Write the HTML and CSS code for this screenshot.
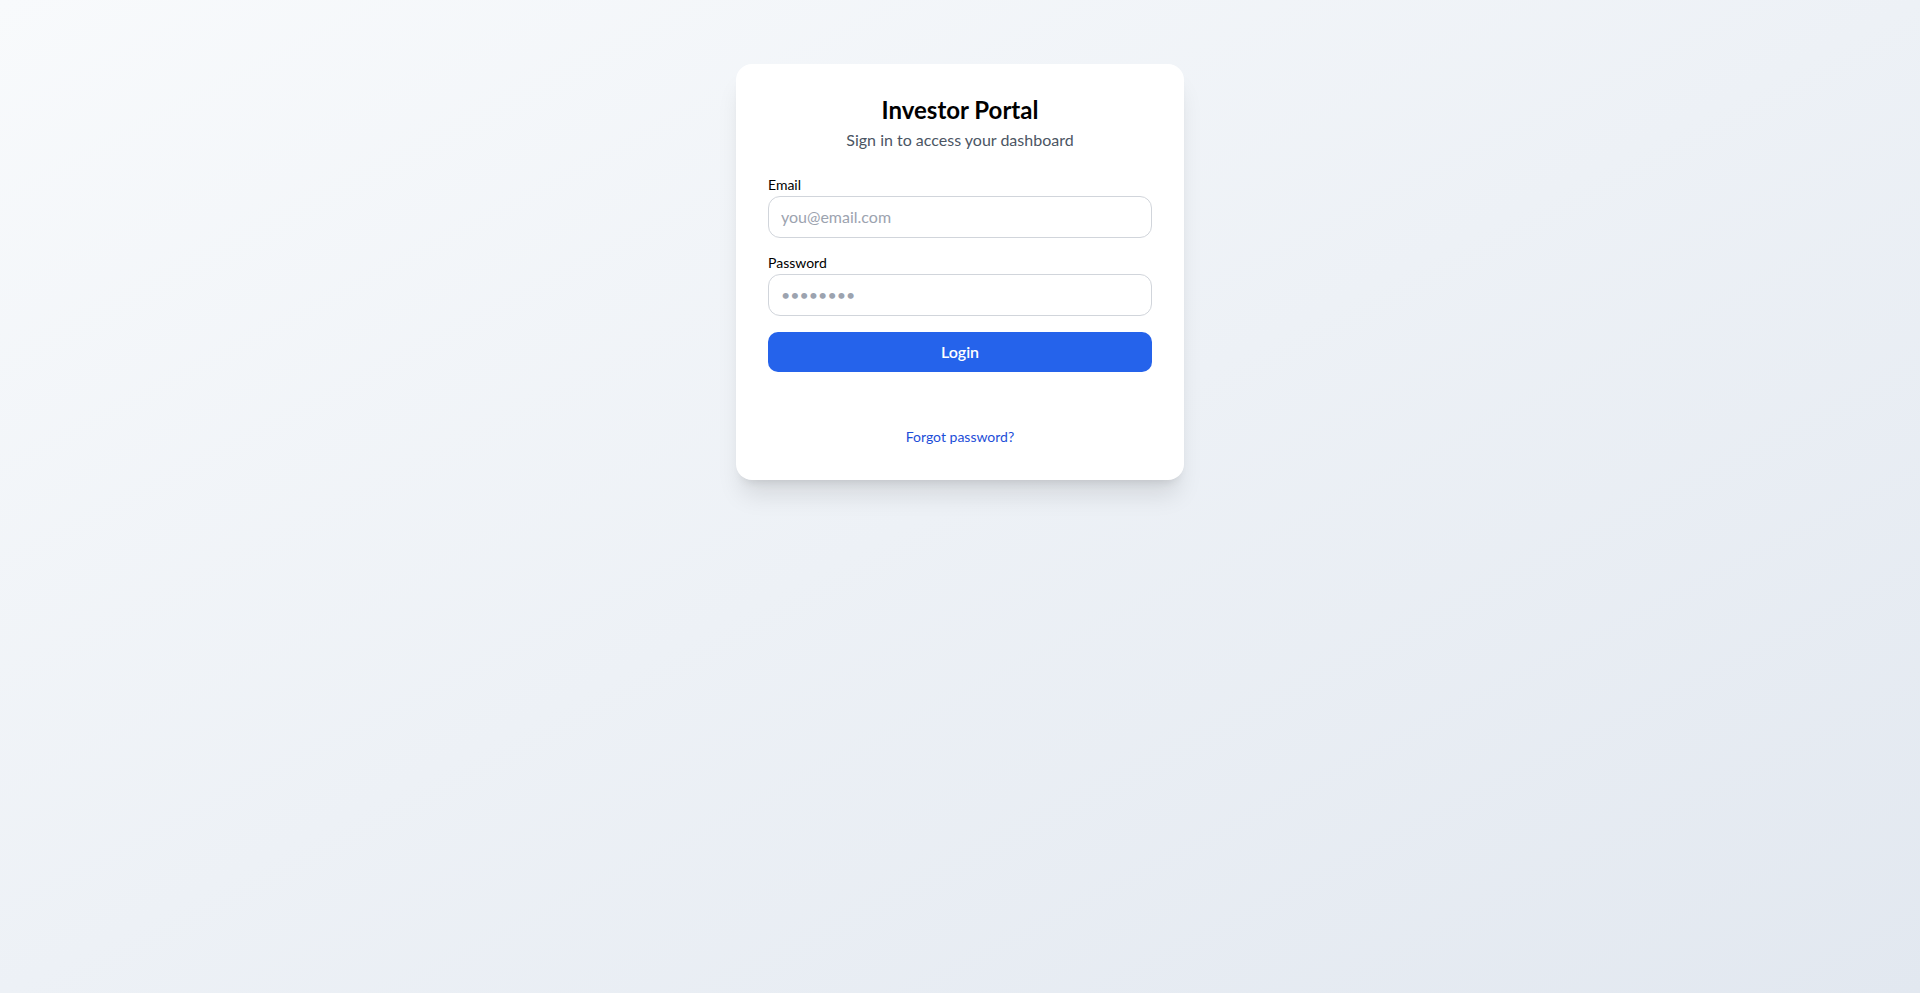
FILE: index.html
```html
<!DOCTYPE html>
<html lang="en">
  <head>
    <meta charset="utf-8">
    <meta name="viewport" content="width=device-width, initial-scale=1.0">
    <title>Investor Portal</title>
    <link rel="stylesheet" href="styles.css">
  </head>
  <body>
    <main class="page">
      <div class="card">
        <h1 class="title">Investor Portal</h1>
        <p class="subtitle">Sign in to access your dashboard</p>
        <form class="form" onsubmit="return false">
          <div class="field">
            <label for="email">Email</label>
            <input id="email" type="email" placeholder="you@email.com">
          </div>
          <div class="field">
            <label for="password">Password</label>
            <input id="password" type="password" placeholder="••••••••">
          </div>
          <button class="button" type="submit">Login</button>
        </form>
        <div class="links">
          <a href="#" class="link">Forgot password?</a>
        </div>
      </div>
    </main>
  </body>
</html>
```

FILE: styles.css
```css
:root {
  --text: #111827;
  --muted: #4b5563;
  --accent: #2563eb;
  --link: #1d4ed8;
  --border: #d1d5db;
}

html, body {
  margin: 0;
  height: 100%;
}
body {
  font-family: Lato, "Open Sans", sans-serif;
  color: var(--text);
  background: linear-gradient(to bottom right, #f8fafc, #e2e8f0);
}
.page {
  display: flex;
  justify-content: center;
  padding-top: 64px;
}
.card {
  width: 448px;
  box-sizing: border-box;
  background: #ffffff;
  border-radius: 16px;
  padding: 30px 32px 33px;
  box-shadow: 0 20px 25px -5px rgba(0, 0, 0, 0.1), 0 8px 10px -6px rgba(0, 0, 0, 0.1);
  text-align: center;
}
.title {
  margin: 0;
  font-size: 24px;
  line-height: 32px;
  font-weight: 700;
  color: #000;
}
.subtitle {
  margin: 1.5px 0 23.5px;
  font-size: 16px;
  line-height: 24px;
  color: var(--muted);
}
.form {
  display: flex;
  flex-direction: column;
  gap: 15px;
  text-align: left;
}
.field label {
  display: block;
  font-size: 14px;
  line-height: 20px;
  font-weight: 400;
  color: #000;
  margin-bottom: 1px;
}
.field input {
  display: block;
  width: 100%;
  box-sizing: border-box;
  font-family: inherit;
  font-size: 16px;
  line-height: 20px;
  padding: 10px 12px;
  border: 1px solid var(--border);
  border-radius: 12px;
  outline: none;
  color: var(--text);
}
.field input::placeholder {
  color: #9ca3af;
}
.button {
  margin-top: 1px;
  font-family: inherit;
  font-size: 16px;
  font-weight: 600;
  line-height: 24px;
  padding: 8px;
  border: 0;
  border-radius: 10px;
  background: var(--accent);
  color: #fff;
  cursor: pointer;
}
.links {
  margin-top: 55px;
  font-size: 14px;
  line-height: 20px;
}
.link {
  color: var(--link);
  text-decoration: none;
}
```
